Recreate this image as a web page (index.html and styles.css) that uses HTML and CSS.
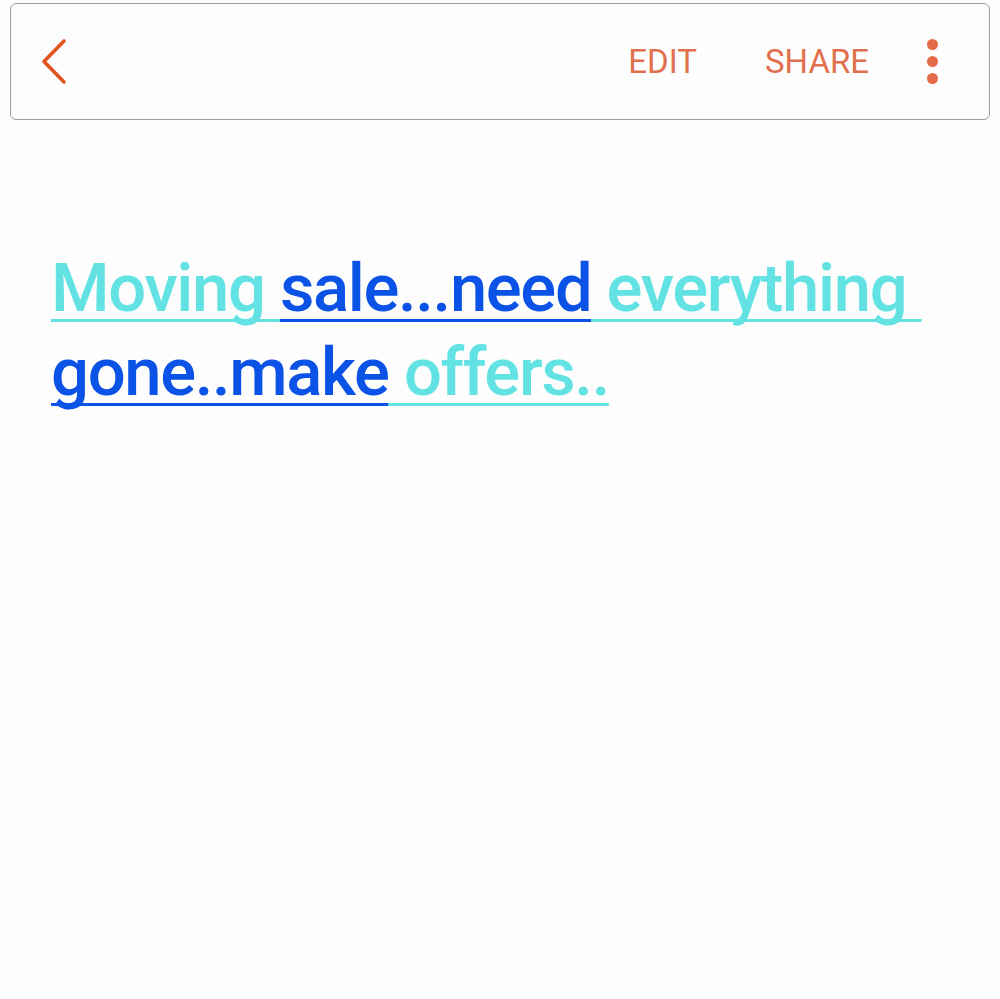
FILE: index.html
```html
<!DOCTYPE html>
<html lang="en">
<head>
  <meta charset="UTF-8">
  <title>Note</title>
  <link rel="stylesheet" href="styles.css">
</head>
<body>
  <!-- Top bar -->
  <header class="toolbar">
    <a href="#" class="back" aria-label="Back">
      <svg width="30" height="50" viewBox="0 0 30 50">
        <path d="M25 4 L5 24.5 L25 45" fill="none" stroke="#e2531f" stroke-width="3.6" stroke-linecap="round" stroke-linejoin="round"/>
      </svg>
    </a>
    <nav class="actions">
      <a href="#">EDIT</a>
      <a href="#">SHARE</a>
      <span class="more" aria-label="More"><i></i><i></i><i></i></span>
    </nav>
  </header>

  <!-- Note body -->
  <div class="note">
    <p>
      <span class="light">Moving </span><span class="dark">sale...need</span><span class="light"> everything&nbsp;<wbr></span><span class="dark">gone..make</span><span class="light"> offers..</span>
    </p>
  </div>
</body>
</html>
```

FILE: styles.css
```css
/* Global */
body {
  margin: 0;
  padding: 0;
  background-color: #fdfdfd;
  font-family: Roboto, "Noto Sans", sans-serif;
}
a {
  text-decoration: none;
}

/* Toolbar */
.toolbar {
  margin: 3px 10px 0 10px;
  height: 117px;
  box-sizing: border-box;
  border: 1px solid #93a2a6;
  border-radius: 6px;
  display: flex;
  align-items: center;
  justify-content: space-between;
  padding: 0 51px 0 28px;
}
.back {
  display: flex;
}
.actions {
  display: flex;
  align-items: center;
}
.actions a {
  color: #e2704f;
  font-size: 33px;
  margin-left: 68px;
}
.actions a:first-child {
  margin-left: 0;
}
.more {
  display: flex;
  flex-direction: column;
  gap: 6px;
  margin-left: 58px;
}
.more i {
  width: 11px;
  height: 11px;
  border-radius: 50%;
  background-color: #e46a48;
}

/* Note text */
.note {
  padding: 126px 40px 0 51px;
}
.note p {
  margin: 0;
  font-size: 67px;
  font-weight: 500;
  line-height: 84px;
  letter-spacing: -1.35px;
}
.note span {
  text-decoration: underline;
  text-decoration-thickness: 3px;
  text-underline-offset: 8px;
  text-decoration-skip-ink: none;
}
.light {
  color: #62e2e3;
}
.dark {
  color: #0b52e6;
}
```
